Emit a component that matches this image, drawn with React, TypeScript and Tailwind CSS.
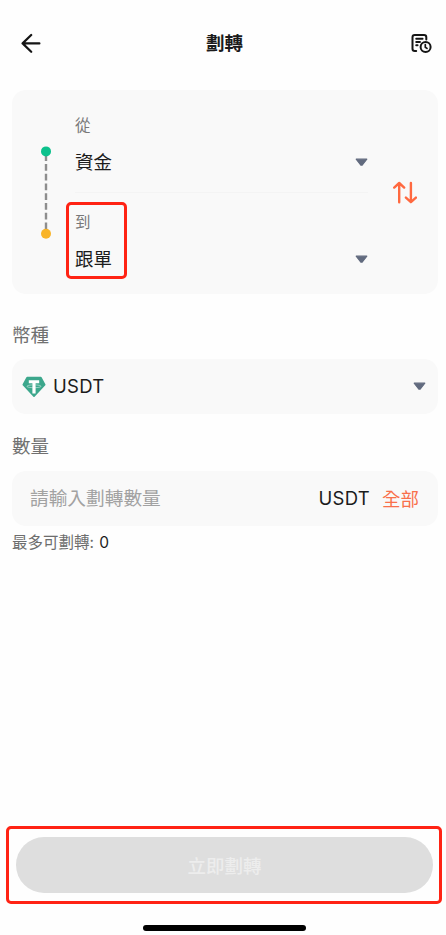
import type { ReactNode } from 'react';

function Caret() {
  return (
    <svg width="13" height="9" viewBox="0 0 13 9" className="shrink-0">
      <path d="M1.200 1.200h10.600L7.700 6.500Q6.500 7.800 5.300 6.500Z" fill="#626b7f" stroke="#626b7f" strokeWidth="1.200" strokeLinejoin="round" />
    </svg>
  );
}

function BackIcon() {
  return (
    <svg width="20" height="20" viewBox="0 0 20 20" fill="none" stroke="#151515" strokeWidth="2.200" strokeLinecap="round" strokeLinejoin="round">
      <path d="M18.400 10.400H1.600M10.200 2L1.600 10.400l8.600 8.400" />
    </svg>
  );
}

function HistoryIcon() {
  return (
    <svg width="21" height="20" viewBox="0 0 21 20" fill="none" stroke="#151515" strokeWidth="2" strokeLinecap="round" strokeLinejoin="round">
      <path d="M5.200 18H3.800Q1.500 18 1.500 15.700V4.200Q1.500 1.900 3.800 1.900h9.200q2.300 0 2.300 2.300v2.400" />
      <path d="M5.200 5.800h6.400M5.200 9h3.800M5.200 12.200h1.400" strokeWidth="1.900" />
      <circle cx="14.600" cy="14" r="5" />
      <path d="M14.300 11.600v2.600l1.700 1.200" strokeWidth="1.700" />
    </svg>
  );
}

function SwapIcon() {
  return (
    <svg width="25" height="23" viewBox="0 0 25 23" fill="none" stroke="#ff6940" strokeWidth="2.400" strokeLinecap="round" strokeLinejoin="round">
      <path d="M7.200 21.200V2.200M2.200 6.600l5-4.600 5 4.600" />
      <path d="M18.900 2v19M13.900 16.600l5 4.600 5-4.600" />
    </svg>
  );
}

function TetherIcon() {
  return (
    <svg width="24" height="22" viewBox="0 0 24 22">
      <path d="M5.200 .8h13.600q.5 0 .8.5l3.800 7q.3.600-.1 1L12.600 20.800q-.6.500-1.200 0L.7 9.300q-.4-.4-.1-1L4.400 1.300Q4.700 .8 5.200 .8Z" fill="#3ca78c" />
      <path d="M6.800 4.200h10.400v3h-3.600v10.200h-3.200V7.200H6.800Z" fill="#fff" />
      <path d="M10.400 8.900C2.500 9.300 3.500 11.700 12 11.700S21.500 9.300 13.600 8.900" fill="none" stroke="#fff" strokeOpacity=".8" strokeWidth=".6" />
    </svg>
  );
}

function Route() {
  return (
    <svg width="12" height="94" viewBox="0 0 12 94" className="shrink-0">
      <path d="M6 9.200V84" stroke="#8e8e8e" strokeWidth="2.400" strokeDasharray="6.900 2.850" />
      <circle cx="6" cy="6.400" r="5" fill="#0cc18c" />
      <circle cx="6" cy="88.700" r="5" fill="#f9b428" />
    </svg>
  );
}

function Account({ label, name }: { label: string; name: string }) {
  return (
    <div className="flex h-[97px] flex-col">
      <span className="h-6 text-[15.500px] leading-6 text-[#787878]">{label}</span>
      <div className="mt-[10px] flex h-7 items-center justify-between">
        <span className="text-[18.500px] leading-7 text-[#1c1c1c]">{name}</span>
        <Caret />
      </div>
    </div>
  );
}

function Label({ children }: { children: ReactNode }) {
  return <h2 className="h-7 text-[18.500px] leading-7 text-[#707070]">{children}</h2>;
}

export default function App() {
  return (
    <div className="flex h-[935px] w-[446px] flex-col overflow-hidden bg-[#fefefe] font-['Inter','Noto_Sans_CJK_TC',sans-serif]">
      <header className="flex h-[90px] items-start justify-between pt-[33px] pr-[14px] pl-[21px]">
        <BackIcon />
        <h1 className="-mt-1 mr-[3px] text-[18.500px] leading-7 font-bold text-[#1b1b1b]">劃轉</h1>
        <HistoryIcon />
      </header>

      <main className="flex flex-1 flex-col pr-2 pl-3">
        {/* 帳戶選擇 */}
        <section className="flex h-[204px] rounded-[14px] bg-[#f9f9f9] pl-7">
          <div className="pt-[55px]">
            <Route />
          </div>
          <div className="relative ml-[23px] w-[293px] pt-[24px]">
            <Account label="從" name="資金" />
            <div className="absolute top-[102px] left-0 h-px w-full bg-[#f4f4f4]" />
            <Account label="到" name="跟單" />
            <div className="absolute top-[112px] -left-[9px] h-[77px] w-[61px] rounded-[5px] border-3 border-[#ff2314]" />
          </div>
          <button className="ml-[24px] flex flex-1 items-center pt-px" aria-label="切換">
            <SwapIcon />
          </button>
        </section>

        <div className="mt-[27px]">
          <Label>幣種</Label>
        </div>
        <button className="mt-[10px] flex h-[55px] items-center rounded-[14px] bg-[#f9f9f9] pr-[12px] pl-[10px]">
          <TetherIcon />
          <span className="ml-[7px] flex-1 text-left text-[18.500px] tracking-[0.3px] text-[#1c1c1c]">USDT</span>
          <Caret />
        </button>

        <div className="mt-[18px]">
          <Label>數量</Label>
        </div>
        <div className="mt-[11px] flex h-[55px] items-center rounded-[14px] bg-[#f9f9f9] pr-[19px] pl-[18px]">
          <span className="flex-1 pt-[2px] text-[18.700px] text-[#a2a2a2]">請輸入劃轉數量</span>
          <span className="text-[18.500px] tracking-[0.3px] text-[#1c1c1c]">USDT</span>
          <span className="ml-[12px] pt-[2px] text-[18.500px] text-[#f9704b]">全部</span>
        </div>
        <p className="mt-[5px] text-[15.500px] leading-6 text-[#6d6d6d]">
          最多可劃轉: <span className="ml-px text-[#1c1c1c]">0</span>
        </p>
      </main>

      <footer className="flex h-[109px] flex-col items-center">
        <div className="ml-[2px] h-[78px] w-[436px] rounded-[5px] border-3 border-[#ff2314] p-2 pr-[6px] pl-[7px]">
          <button className="h-14 w-full rounded-full bg-[#dedede] pt-[3px] text-[18.500px] font-medium text-[#ededed]">立即劃轉</button>
        </div>
        <div className="mt-[21px] ml-[3px] h-[6px] w-[163px] rounded-full bg-black" />
      </footer>
    </div>
  );
}
